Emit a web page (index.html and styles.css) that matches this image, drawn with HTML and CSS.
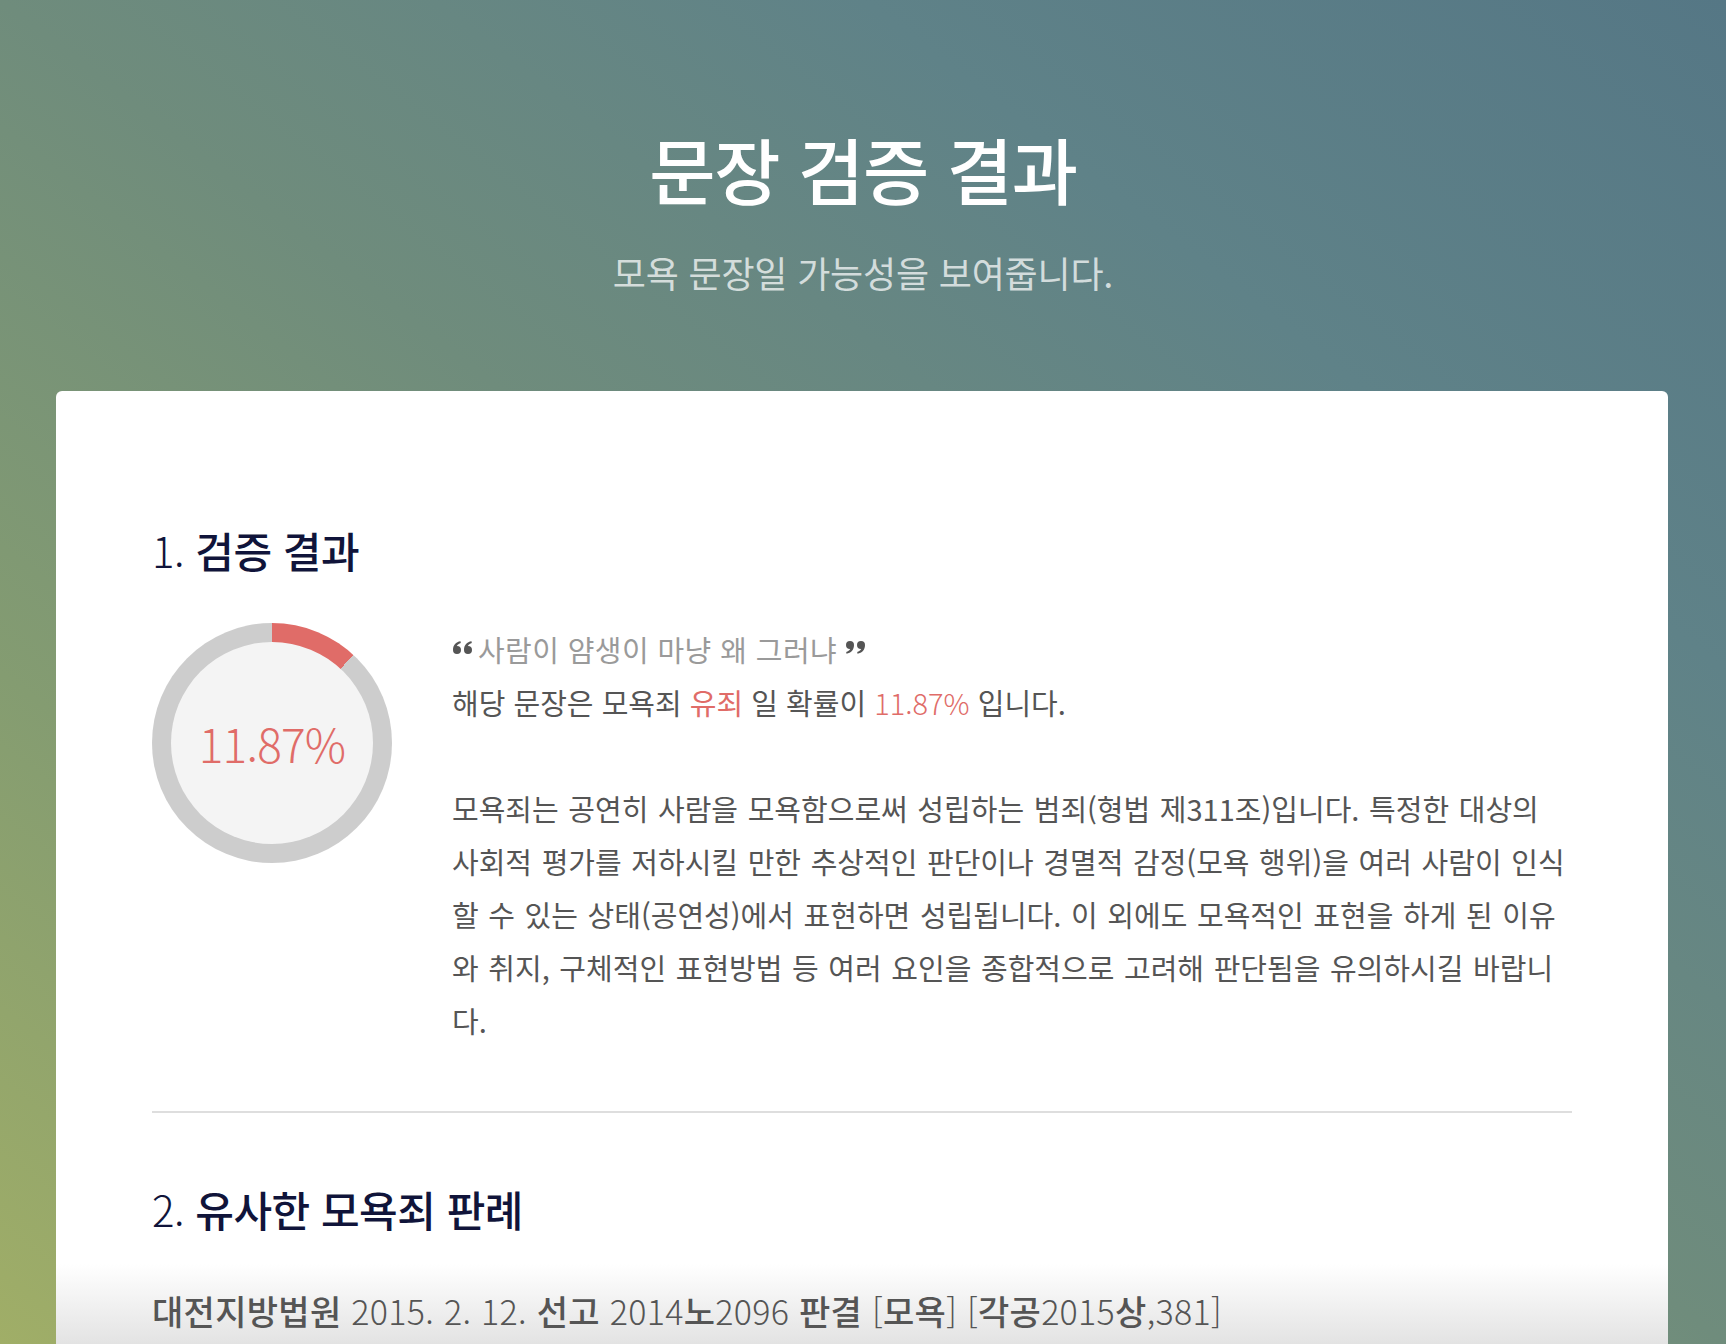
FILE: index.html
```html
<!DOCTYPE html>
<html lang="ko">
<head>
<meta charset="utf-8">
<title>문장 검증 결과</title>
<link rel="stylesheet" href="styles.css">
</head>
<body>
<header class="hero">
  <h1 class="hero-title">문장 검증 결과</h1>
  <p class="hero-sub">모욕 문장일 가능성을 보여줍니다.</p>
</header>
<main class="card">
  <section class="section">
    <h2 class="section-title"><span class="num">1.</span> 검증 결과</h2>
    <div class="result">
      <div class="donut" style="--p: 11.87%">
        <div class="donut-inner"><span class="donut-value">11.87%</span></div>
      </div>
      <div class="result-text">
        <p class="quote"><svg class="qmark qmark-left" viewBox="0 0 22 13" aria-hidden="true"><path d="M5 5a4 4 0 1 1 0 8a4 4 0 1 1 0-8zM1 9C1 4 4 1 8.5 0.3L8.8 2C6.3 2.7 4.6 4.3 4.3 6.4Z"/><path d="M16 5a4 4 0 1 1 0 8a4 4 0 1 1 0-8zM12 9C12 4 15 1 19.5 0.3L19.8 2C17.3 2.7 15.6 4.3 15.3 6.4Z"/></svg>사람이 얌생이 마냥 왜 그러냐<svg class="qmark qmark-right" viewBox="0 0 22 13" aria-hidden="true"><g transform="rotate(180 11 6.5)"><path d="M5 5a4 4 0 1 1 0 8a4 4 0 1 1 0-8zM1 9C1 4 4 1 8.5 0.3L8.8 2C6.3 2.7 4.6 4.3 4.3 6.4Z"/><path d="M16 5a4 4 0 1 1 0 8a4 4 0 1 1 0-8zM12 9C12 4 15 1 19.5 0.3L19.8 2C17.3 2.7 15.6 4.3 15.3 6.4Z"/></g></svg></p>
        <p class="verdict">해당 문장은 모욕죄 <span class="hl">유죄</span> 일 확률이 <span class="pct">11.87%</span> 입니다.</p>
        <p class="desc">모욕죄는 공연히 사람을 모욕함으로써 성립하는 범죄(형법 제311조)입니다. 특정한 대상의<br>사회적 평가를 저하시킬 만한 추상적인 판단이나 경멸적 감정(모욕 행위)을 여러 사람이 인식<br>할 수 있는 상태(공연성)에서 표현하면 성립됩니다. 이 외에도 모욕적인 표현을 하게 된 이유<br>와 취지, 구체적인 표현방법 등 여러 요인을 종합적으로 고려해 판단됨을 유의하시길 바랍니<br>다.</p>
      </div>
    </div>
  </section>
  <hr class="divider">
  <section class="section">
    <h2 class="section-title section-title-2"><span class="num">2.</span> 유사한 모욕죄 판례</h2>
    <p class="case"><b>대전지방법원</b> 2015. 2. 12. <b>선고</b> 2014<b>노</b>2096 <b>판결</b> [<b>모욕</b>] [<b>각공</b>2015<b>상</b>,381]</p>
  </section>
</main>
</body>
</html>
```

FILE: styles.css
```css
* { box-sizing: border-box; }
html, body { margin: 0; }
body {
  height: 1344px;
  overflow: hidden;
  font-family: "Noto Sans CJK KR", "Noto Sans", sans-serif;
  background: linear-gradient(to top right, #a0ae67 0%, #849c71 25%, #6f8c7c 50%, #5f8288 75%, #557785 100%);
}
.hero {
  text-align: center;
  padding-top: 125px;
}
.hero-title {
  margin: 0;
  font-size: 72px;
  line-height: 86px;
  font-weight: 500;
  color: #fff;
  letter-spacing: -1.3px;
}
.hero-sub {
  margin: 40px 0 0;
  font-size: 36px;
  line-height: 42px;
  color: rgba(255, 255, 255, 0.72);
  letter-spacing: -0.2px;
}
.card {
  margin: 98px 0 0 56px;
  width: 1612px;
  height: 953px;
  overflow: hidden;
  background: linear-gradient(to bottom, #fff calc(100% - 80px), #e3e3e3 100%);
  border-radius: 6px 6px 0 0;
  padding: 134px 96px 0;
}
.section-title {
  margin: 0;
  font-size: 42px;
  line-height: 50px;
  font-weight: 500;
  color: #10143a;
  letter-spacing: -0.5px;
}
.num { font-weight: 300; }
.result {
  display: flex;
  align-items: flex-start;
  gap: 60px;
  margin-top: 48px;
}
.donut {
  flex: 0 0 240px;
  height: 240px;
  border-radius: 50%;
  padding: 19px;
  background: conic-gradient(#e06c68 0 var(--p), #cdcdcd 0);
}
.donut-inner {
  width: 100%;
  height: 100%;
  border-radius: 50%;
  background: #f4f4f4;
  display: flex;
  align-items: center;
  justify-content: center;
}
.donut-value {
  font-size: 46px;
  font-weight: 300;
  color: #e06c68;
  letter-spacing: -0.8px;
}
.result-text {
  flex: 1;
  font-size: 29px;
  line-height: 53px;
  color: #555;
  letter-spacing: 0;
}
.result-text p { margin: 0; }
.quote { color: #9a9a9a; letter-spacing: 0.4px; }
.qmark {
  width: 22px;
  height: 13px;
  fill: #555;
  vertical-align: 8px;
}
.qmark-left { margin-right: 4px; }
.qmark-right { margin-left: 7px; }
.hl { color: #e06c68; }
.pct { color: #e06c68; font-weight: 300; }
.result-text .desc {
  margin-top: 53px;
  word-spacing: 1.5px;
}
.divider {
  border: 0;
  border-top: 2px solid #dedede;
  margin: 64px 0 0;
}
.section-title-2 { margin-top: 71px; }
.case {
  margin: 52px 0 0;
  font-size: 34px;
  line-height: 50px;
  font-weight: 300;
  color: #555;
  letter-spacing: 0.3px;
}
.case b { font-weight: 500; }
```
